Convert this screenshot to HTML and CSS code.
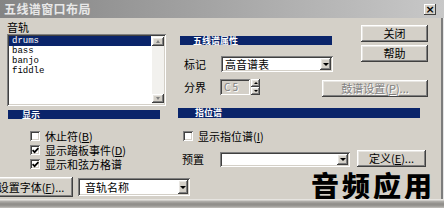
FILE: index.html
```html
<!DOCTYPE html>
<html lang="zh">
<head>
<meta charset="utf-8">
<title>五线谱窗口布局</title>
<link rel="stylesheet" href="styles.css">
</head>
<body>
<div class="window">
  <div class="titlebar">
    <span class="title">五线谱窗口布局</span>
    <span class="close">×</span>
  </div>
  <div class="main">
    <div class="col-left">
      <div class="label track-label">音轨</div>
      <div class="listbox sunken">
        <ul class="items">
          <li class="sel">drums</li>
          <li>bass</li>
          <li>banjo</li>
          <li>fiddle</li>
        </ul>
        <div class="vscroll">
          <span class="sbtn up raised"></span>
          <span class="track"></span>
          <span class="sbtn down raised"></span>
        </div>
      </div>
      <div class="bar bar-show">显示</div>
      <div class="checks">
        <div class="check"><span class="box sunken"></span><span>休止符(<u>B</u>)</span></div>
        <div class="check"><span class="box sunken"><svg width="7" height="7" viewBox="0 0 7 7"><path d="M0.6 3.2 L2.6 5.2 L6.4 1.2" stroke="#000" stroke-width="1.7" fill="none"/></svg></span><span>显示踏板事件(<u>D</u>)</span></div>
        <div class="check"><span class="box sunken"><svg width="7" height="7" viewBox="0 0 7 7"><path d="M0.6 3.2 L2.6 5.2 L6.4 1.2" stroke="#000" stroke-width="1.7" fill="none"/></svg></span><span>显示和弦方格谱</span></div>
      </div>
    </div>
    <div class="col-right">
      <div class="top">
        <div class="staff">
          <div class="bar bar-staff">五线谱属性</div>
          <div class="field-row">
            <span class="label label-clef">标记</span>
            <div class="combo clef sunken"><span class="val">高音谱表</span><span class="drop raised"></span></div>
          </div>
        </div>
        <div class="buttons">
          <button class="btn raised">关闭</button>
          <button class="btn raised">帮助</button>
        </div>
      </div>
      <div class="split-row">
        <span class="label label-split">分界</span>
        <div class="spin">
          <span class="spin-edit sunken">C 5</span>
          <span class="spin-btns"><span class="sp up raised"></span><span class="sp down raised"></span></span>
        </div>
        <button class="btn raised disabled drum">鼓谱设置(<u>P</u>)...</button>
      </div>
      <div class="bar bar-tab">指位谱</div>
      <div class="check check-tab"><span class="box sunken"></span><span>显示指位谱(<u>I</u>)</span></div>
      <div class="preset-row">
        <span class="label label-preset">预置</span>
        <div class="combo preset sunken"><span class="val"></span><span class="drop raised"></span></div>
        <button class="btn raised define">定义(<u>E</u>)...</button>
      </div>
    </div>
  </div>
  <div class="bottom-row">
    <button class="btn raised font-btn">设置字体(<u>F</u>)...</button>
    <div class="combo name sunken"><span class="val">音轨名称</span><span class="drop raised"></span></div>
    <div class="brand">音频应用</div>
  </div>
  <div class="frame-bottom"></div>
</div>
</body>
</html>
```
FILE: styles.css
```css
* { box-sizing: border-box; }
body {
  margin: 0;
  background: #d4d0c8;
  font-family: "Noto Sans CJK SC", "Noto Sans", sans-serif;
  font-size: 11px;
  color: #000;
}
.window {
  width: 444px;
  height: 208px;
  overflow: hidden;
  background: #d4d0c8;
  display: flex;
  flex-direction: column;
  box-shadow: inset -1px 0 #e4e4e4, inset -3px 0 #7c7c7c;
}
.sunken {
  background: #fff;
  box-shadow: inset 1px 1px #808080, inset -1px -1px #fff, inset 2px 2px #404040, inset -2px -2px #d4d0c8;
}
.raised {
  background: #d4d0c8;
  box-shadow: inset -1px -1px #404040, inset 1px 1px #fff, inset -2px -2px #808080, inset 2px 2px #e8e6e2;
}
/* title bar */
.titlebar {
  height: 18px;
  flex: none;
  display: flex;
  align-items: center;
  padding: 0 4px;
  background: linear-gradient(to right, #848484, #c8c8c8);
}
.title {
  font-size: 12px;
  font-weight: bold;
  color: #e8e8e8;
  line-height: 18px;
  letter-spacing: 0.4px;
}
.close {
  margin-left: auto;
  margin-right: 4px;
  width: 12px;
  height: 11px;
  background: #d4d0c8;
  box-shadow: inset -1px -1px #404040, inset 1px 1px #fff;
  font: bold 11px/11px "DejaVu Sans", sans-serif;
  text-align: center;
  color: #000;
}
/* main */
.main {
  height: 154px;
  flex: none;
  display: flex;
}
.col-left {
  width: 172px;
  flex: none;
  padding-left: 7px;
  display: flex;
  flex-direction: column;
}
.label { line-height: 14px; white-space: nowrap; }
.track-label { margin-top: 2px; height: 14px; }
.listbox {
  width: 159px;
  height: 72px;
  padding: 2px;
  display: flex;
}
.items {
  list-style: none;
  margin: 0;
  padding: 0;
  flex: 1;
  font-family: "Liberation Mono", monospace;
  font-size: 9px;
  line-height: 10px;
}
.items li { height: 10px; padding-left: 3px; margin-right: 1px; }
.items li.sel { background: #0a246a; color: #fff; }
.vscroll {
  width: 12px;
  display: flex;
  flex-direction: column;
  background: #f2f1ee;
}
.sbtn {
  height: 9px;
  display: flex;
  align-items: center;
  justify-content: center;
  margin-top: 1px;
}
.sbtn.down { margin-top: 0; margin-bottom: 1px; }
.sbtn::after {
  content: "";
  border-left: 2.5px solid transparent;
  border-right: 2.5px solid transparent;
}
.sbtn.up::after { border-bottom: 3px solid #808080; }
.sbtn.down::after { border-top: 3px solid #808080; }
.track { flex: 1; }
.bar {
  background: #0a246a;
  color: #fff;
  font-size: 9px;
  font-weight: bold;
  line-height: 9px;
  height: 9px;
  padding-left: 14px;
  white-space: nowrap;
}
.bar-show { margin-top: 4px; margin-left: 1px; width: 152px; }
.checks { margin-top: 10px; padding-left: 23px; }
.check {
  display: flex;
  align-items: center;
  height: 14px;
  line-height: 14px;
  white-space: nowrap;
}
.box {
  width: 10px;
  height: 10px;
  flex: none;
  margin-right: 5px;
  display: flex;
  align-items: center;
  justify-content: center;
}
.box svg { display: block; }
/* right column */
.col-right {
  flex: 1;
  padding: 0 16px 0 6px;
  display: flex;
  flex-direction: column;
}
.top { display: flex; height: 54px; }
.staff { margin-left: 2px; width: 153px; }
.bar-staff { margin-top: 18px; width: 152px; padding-left: 13px; }
.field-row { display: flex; margin-top: 11px; align-items: center; height: 16px; }
.label-clef { margin-left: 4px; width: 37px; }
.combo {
  display: flex;
  padding: 2px;
  align-items: stretch;
}
.combo .val { flex: 1; padding-left: 2px; white-space: nowrap; line-height: 12px; }
.drop {
  width: 11px;
  flex: none;
  display: flex;
  align-items: center;
  justify-content: center;
}
.drop::after {
  content: "";
  border-left: 3px solid transparent;
  border-right: 3px solid transparent;
  border-top: 3px solid #000;
}
.clef { width: 112px; height: 16px; }
.buttons {
  margin-left: auto;
  margin-top: 7px;
  display: flex;
  flex-direction: column;
  gap: 3px;
}
.btn {
  border: 0;
  margin: 0;
  padding: 0;
  font: inherit;
  color: #000;
  white-space: nowrap;
  text-align: center;
}
.buttons .btn { width: 67px; height: 17px; line-height: 17px; }
.split-row { display: flex; margin-top: 7px; height: 18px; align-items: flex-start; }
.label-split { margin-left: 6px; width: 36px; margin-top: 1px; }
.spin { display: flex; }
.spin-edit {
  width: 30px;
  height: 16px;
  background: #d4d0c8;
  color: #808080;
  text-shadow: 1px 1px #fff;
  padding-left: 4px;
  line-height: 16px;
  font-size: 10px;
  white-space: nowrap;
}
.spin-btns { display: flex; flex-direction: column; margin-left: 1px; width: 9px; height: 16px; }
.sp { flex: 1; display: flex; align-items: center; justify-content: center; }
.sp::after {
  content: "";
  border-left: 2px solid transparent;
  border-right: 2px solid transparent;
}
.sp.up::after { border-bottom: 2px solid #000; }
.sp.down::after { border-top: 2px solid #000; }
.drum {
  margin-left: auto;
  margin-top: 1px;
  width: 106px;
  height: 17px;
  line-height: 17px;
}
.btn.disabled { color: #808080; text-shadow: 1px 1px #fff; }
.bar-tab { margin-top: 11px; width: 242px; height: 10px; line-height: 10px; padding-left: 17px; }
.check-tab { margin-top: 11px; padding-left: 5px; }
.preset-row { display: flex; margin-top: 7px; align-items: flex-end; height: 17px; }
.label-preset { margin-left: 4px; width: 38px; align-self: center; }
.preset { width: 130px; height: 15px; }
.define { margin-left: 7px; width: 69px; height: 17px; line-height: 17px; }
/* bottom */
.bottom-row {
  height: 27px;
  flex: none;
  display: flex;
  align-items: flex-start;
}
.font-btn {
  margin-left: -11px;
  margin-top: 5px;
  width: 84px;
  height: 20px;
  line-height: 20px;
  flex: none;
}
.name {
  margin-left: 5px;
  margin-top: 6px;
  width: 112px;
  height: 18px;
  flex: none;
}
.name .val { padding-left: 5px; line-height: 14px; }
.name .drop { width: 10px; }
.brand {
  margin-left: auto;
  margin-right: 9px;
  margin-top: -1px;
  font-size: 28px;
  line-height: 28px;
  font-weight: 900;
  letter-spacing: 3px;
  white-space: nowrap;
}
.frame-bottom {
  height: 9px;
  flex: none;
  background: linear-gradient(to bottom, #e6e4e0 0, #e6e4e0 1px, #b4b2ae 2px, #8e8c88 5px, #9a9894 7px, #c4c2be 9px);
}
```
